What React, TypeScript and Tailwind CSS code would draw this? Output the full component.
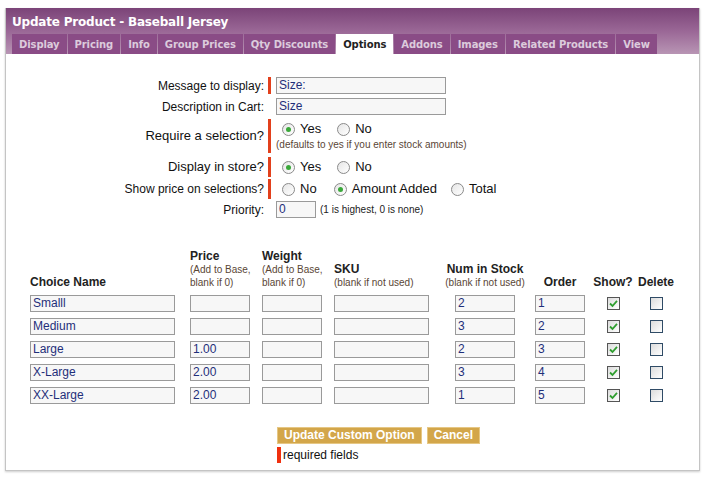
import React from 'react'

const tabs = ['Display', 'Pricing', 'Info', 'Group Prices', 'Qty Discounts', 'Options', 'Addons', 'Images', 'Related Products', 'View']

const choices = [
  { name: 'Smalll', price: '', stock: '2', order: '1' },
  { name: 'Medium', price: '', stock: '3', order: '2' },
  { name: 'Large', price: '1.00', stock: '2', order: '3' },
  { name: 'X-Large', price: '2.00', stock: '3', order: '4' },
  { name: 'XX-Large', price: '2.00', stock: '1', order: '5' },
]

const arial = { fontFamily: '"Liberation Sans", Arial, sans-serif' }
const verdana = { fontFamily: '"DejaVu Sans", Verdana, sans-serif' }

function Field({ value, className }: { value: string; className: string }) {
  return (
    <div
      className={`h-[17px] border border-[#9a9a9a] bg-[#f7f7f7] pl-[2px] text-[12px] leading-[15px] text-[#1f2f7a] ${className}`}
    >
      {value}
    </div>
  )
}

function Radio({ checked, label, className = '' }: { checked?: boolean; label: string; className?: string }) {
  return (
    <span className={`inline-flex items-center ${className}`}>
      <span className="flex h-[13px] w-[13px] items-center justify-center rounded-full border border-[#8a8a8a] bg-gradient-to-br from-[#e6e6e6] to-white">
        {checked && <span className="h-[5px] w-[5px] rounded-full bg-[#3aa83a]" />}
      </span>
      <span className="ml-[5px] text-[13px] text-[#111]">{label}</span>
    </span>
  )
}

function Box({ checked, show }: { checked?: boolean; show?: boolean }) {
  return (
    <span
      className={`flex h-[13px] w-[13px] items-center justify-center border bg-gradient-to-br from-[#dcdcdc] to-white ${
        show ? 'border-[#555]' : 'border-[#2f4b66]'
      }`}
    >
      {checked && (
        <svg width="9" height="9" viewBox="0 0 9 9">
          <path d="M1 4.5 L3.5 7 L8 1.8" fill="none" stroke="#2f9e2f" strokeWidth="1.8" />
        </svg>
      )}
    </span>
  )
}

function Row({
  label,
  required,
  children,
  className = '',
  big,
}: {
  label: string
  required?: boolean
  children: React.ReactNode
  className?: string
  big?: boolean
}) {
  return (
    <div className={`flex items-stretch ${className}`}>
      <div className={`flex w-[258px] items-center justify-end text-[#111] ${big ? 'text-[13px]' : 'text-[12px]'}`}>{label}</div>
      <div className={`ml-[4px] w-[3px] ${required ? 'bg-[#e2401c]' : ''}`} />
      <div className="ml-[5px]">{children}</div>
    </div>
  )
}

export default function App() {
  return (
    <div className="h-[479px] w-[706px] bg-white pl-[5px] pt-[8px]" style={arial}>
      <div className="h-[463px] w-[695px] border-x border-b border-[#c4c4c4] shadow-[0_1px_2px_rgba(0,0,0,0.2)]">
        {/* Header */}
        <div className="bg-gradient-to-b from-[#7b4478] via-[#9a6796] to-[#b895b4] pl-[6px]">
          <div className="h-[26px] pt-[5px] text-[12px] font-bold tracking-[-0.2px] text-white" style={verdana}>
            Update Product - Baseball Jersey
          </div>
          <div className="flex h-[20px] gap-[1px]" style={verdana}>
            {tabs.map((t) => (
              <div
                key={t}
                className={`flex items-center px-[7px] text-[10px] font-bold tracking-[-0.1px] ${
                  t === 'Options' ? 'bg-white text-[#222]' : 'bg-[#8a4c86] text-[#dccbdc]'
                }`}
              >
                {t}
              </div>
            ))}
          </div>
        </div>

        {/* Option settings */}
        <div className="pt-[23px]">
          <Row label="Message to display:" required className="h-[17px]">
            <Field value="Size:" className="w-[170px]" />
          </Row>
          <Row label="Description in Cart:" className="mt-[4px] h-[17px]">
            <Field value="Size" className="w-[170px]" />
          </Row>
          <Row label="Require a selection?" required big className="mt-[4px] h-[34px]">
            <div className="flex h-[20px] items-center pl-[6px]">
              <Radio checked label="Yes" />
              <Radio label="No" className="ml-[16px]" />
            </div>
            <div className="text-[10px] leading-[12px] text-[#5a4636]">(defaults to yes if you enter stock amounts)</div>
          </Row>
          <Row label="Display in store?" required big className="mt-[4px] h-[20px]">
            <div className="flex h-[20px] items-center pl-[6px]">
              <Radio checked label="Yes" />
              <Radio label="No" className="ml-[16px]" />
            </div>
          </Row>
          <Row label="Show price on selections?" required className="mt-[2px] h-[20px]">
            <div className="flex h-[20px] items-center pl-[6px]">
              <Radio label="No" />
              <Radio checked label="Amount Added" className="ml-[17px]" />
              <Radio label="Total" className="ml-[14px]" />
            </div>
          </Row>
          <Row label="Priority:" className="mt-[2px] h-[17px]">
            <div className="flex items-center">
              <Field value="0" className="w-[40px]" />
              <span className="ml-[4px] text-[10px] text-[#222]">(1 is highest, 0 is none)</span>
            </div>
          </Row>
        </div>

        {/* Choices table */}
        <div className="mt-[31px] pl-[24px]">
          <div className="grid grid-cols-[160px_72px_72px_107px_88px_62px_44px_42px] items-end text-[#222]">
            <div className="text-[12px] font-bold leading-[14px]">Choice Name</div>
            <div>
              <div className="text-[12px] font-bold leading-[14px]">Price</div>
              <div className="text-[10px] leading-[13px] text-[#5a4636]">(Add to Base,<br />blank if 0)</div>
            </div>
            <div>
              <div className="text-[12px] font-bold leading-[14px]">Weight</div>
              <div className="text-[10px] leading-[13px] text-[#5a4636]">(Add to Base,<br />blank if 0)</div>
            </div>
            <div>
              <div className="text-[12px] font-bold leading-[14px]">SKU</div>
              <div className="text-[10px] leading-[13px] text-[#5a4636]">(blank if not used)</div>
            </div>
            <div className="text-center">
              <div className="text-[12px] font-bold leading-[14px]">Num in Stock</div>
              <div className="whitespace-nowrap text-[10px] leading-[13px] text-[#5a4636]">(blank if not used)</div>
            </div>
            <div className="text-center text-[12px] font-bold leading-[14px]">Order</div>
            <div className="text-center text-[12px] font-bold leading-[14px]">Show?</div>
            <div className="text-center text-[12px] font-bold leading-[14px]">Delete</div>
          </div>

          <div className="mt-[6px] flex flex-col gap-[6px]">
            {choices.map((c) => (
              <div key={c.name} className="grid grid-cols-[160px_72px_72px_107px_88px_62px_44px_42px] items-center">
                <Field value={c.name} className="w-[145px]" />
                <Field value={c.price} className="w-[60px]" />
                <Field value="" className="w-[60px]" />
                <Field value="" className="w-[95px]" />
                <div className="flex justify-center">
                  <Field value={c.stock} className="w-[60px]" />
                </div>
                <div className="flex justify-center">
                  <Field value={c.order} className="w-[50px]" />
                </div>
                <div className="flex justify-center">
                  <Box checked show />
                </div>
                <div className="flex justify-center">
                  <Box />
                </div>
              </div>
            ))}
          </div>
        </div>

        {/* Actions */}
        <div className="mt-[23px] pl-[271px]">
          <div className="flex gap-[5px]">
            <button className="h-[17px] border border-[#e6c784] bg-[#d3a64a] px-[6px] text-[12px] font-bold leading-[15px] text-white">
              Update Custom Option
            </button>
            <button className="h-[17px] border border-[#e6c784] bg-[#d3a64a] px-[6px] text-[12px] font-bold leading-[15px] text-white">
              Cancel
            </button>
          </div>
          <div className="mt-[3px] flex h-[16px] items-center">
            <span className="h-[16px] w-[4px] bg-[#f0300f]" />
            <span className="ml-[2px] text-[12px] text-[#111]">required fields</span>
          </div>
        </div>
      </div>
    </div>
  )
}
